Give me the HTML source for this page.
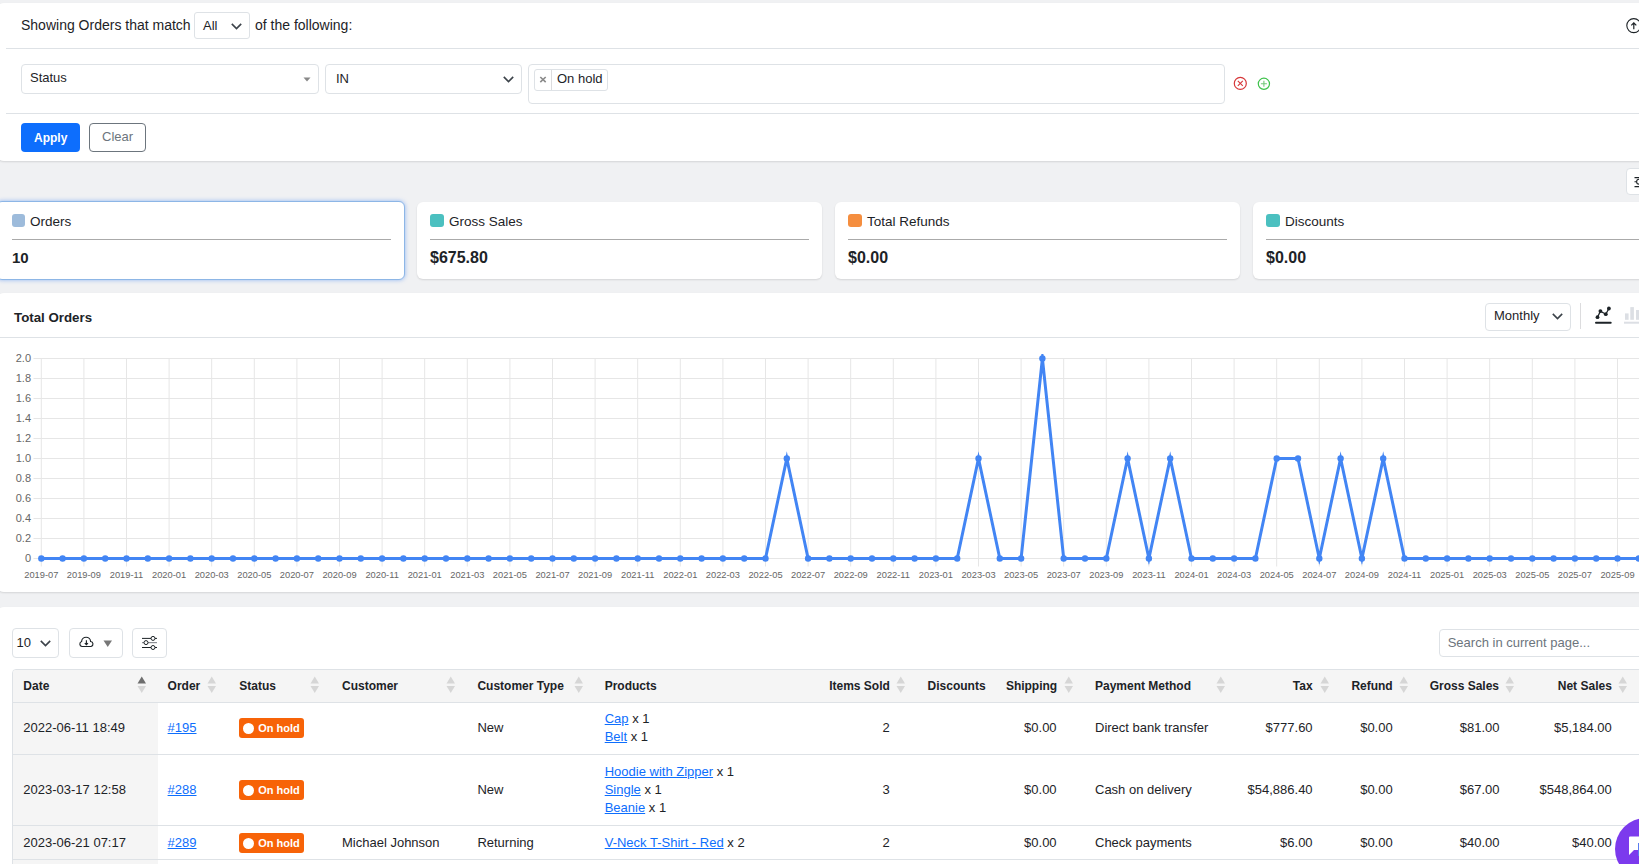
<!DOCTYPE html>
<html><head><meta charset="utf-8">
<style>
*{box-sizing:border-box;margin:0;padding:0}
html,body{width:1639px;height:864px;overflow:hidden;background:#f0f1f3;font-family:"Liberation Sans",sans-serif;color:#1d2327}
.abs{position:absolute}
.card{position:absolute;background:#fff;border-radius:8px;box-shadow:0 1px 2px rgba(0,0,0,.12)}
.hline{position:absolute;height:1px;background:#dee2e6}
.sel{position:absolute;border:1px solid #dee2e6;border-radius:4px;background:#fff}
.t{position:absolute;white-space:nowrap;line-height:1}
.chev{position:absolute}
</style></head><body>

<!-- FILTER CARD -->
<div class="card" style="left:-4px;top:3px;width:1720px;height:158px;"></div>
<div class="t" style="left:21px;top:18px;font-size:14px;">Showing Orders that match</div>
<div class="sel" style="left:194px;top:12px;width:56px;height:27px;border-radius:3px;"></div>
<div class="t" style="left:203px;top:19px;font-size:13px;">All</div>
<svg class="chev" style="left:231px;top:23px" width="11" height="7" viewBox="0 0 11 7"><path d="M0.8 0.9 L5.5 5.6 L10.2 0.9" fill="none" stroke="#3c434a" stroke-width="1.6"/></svg>
<div class="t" style="left:255px;top:18px;font-size:14px;">of the following:</div>
<div class="hline" style="left:6px;top:48px;width:1700px;"></div>

<div class="sel" style="left:21px;top:64px;width:298px;height:30px;"></div>
<div class="t" style="left:30px;top:71px;font-size:13px;">Status</div>
<svg class="abs" style="left:303px;top:77px" width="8" height="5" viewBox="0 0 8 5"><path d="M0.5 0.5 L7.5 0.5 L4 4.5Z" fill="#888"/></svg>

<div class="sel" style="left:325px;top:64px;width:197px;height:30px;"></div>
<div class="t" style="left:336px;top:72px;font-size:13px;">IN</div>
<svg class="chev" style="left:503px;top:76px" width="11" height="7" viewBox="0 0 11 7"><path d="M0.8 0.9 L5.5 5.6 L10.2 0.9" fill="none" stroke="#3c434a" stroke-width="1.6"/></svg>

<div class="sel" style="left:528px;top:64px;width:697px;height:40px;"></div>
<div class="sel" style="left:534px;top:69px;width:74px;height:22px;border-radius:3px;"></div>
<div class="abs" style="left:551px;top:70px;width:1px;height:20px;background:#dcdcde"></div>
<svg class="abs" style="left:539px;top:76px" width="8" height="7" viewBox="0 0 8 7"><path d="M1.3 1 L6.7 6.2 M6.7 1 L1.3 6.2" stroke="#8a8a8a" stroke-width="1.6"/></svg>
<div class="t" style="left:557px;top:72px;font-size:13px;">On hold</div>

<svg class="abs" style="left:1233px;top:76px" width="15" height="15" viewBox="0 0 15 15"><circle cx="7.3" cy="7.4" r="6" fill="none" stroke="#d63638" stroke-width="1.2"/><path d="M4.8 4.9 L9.8 9.9 M9.8 4.9 L4.8 9.9" stroke="#d63638" stroke-width="1.1"/></svg>
<svg class="abs" style="left:1257px;top:77px" width="14" height="14" viewBox="0 0 14 14"><circle cx="6.9" cy="6.8" r="5.6" fill="none" stroke="#3ec24b" stroke-width="1.2"/><path d="M6.9 3.8 V9.8 M3.9 6.8 H9.9" stroke="#73c878" stroke-width="1.1"/></svg>

<div class="hline" style="left:6px;top:113px;width:1700px;"></div>
<div class="abs" style="left:21px;top:123px;width:59px;height:29px;background:#0d6efd;border-radius:4px;"></div>
<div class="t" style="left:34px;top:131.5px;font-size:12px;font-weight:700;color:#fff;">Apply</div>
<div class="abs" style="left:89px;top:123px;width:57px;height:29px;border:1px solid #6c757d;border-radius:4px;"></div>
<div class="t" style="left:102px;top:130px;font-size:13px;color:#6c757d;">Clear</div>

<svg class="abs" style="left:1626px;top:17.5px" width="16" height="16" viewBox="0 0 16 16"><circle cx="7.8" cy="7.6" r="7" fill="none" stroke="#1d2327" stroke-width="1.1"/><path d="M7.8 11.3 V4.8 M5.3 7.3 L7.8 4.8 L10.3 7.3" fill="none" stroke="#1d2327" stroke-width="1.2"/></svg>

<!-- small top-right button -->
<div class="sel" style="left:1626px;top:168px;width:40px;height:27px;border-radius:4px;"></div>
<svg class="abs" style="left:1630px;top:172px" width="12" height="20" viewBox="0 0 12 20"><path d="M4.5 5.6 H12 M4.5 14.6 H12 M4.5 9.7 H6.5" stroke="#1d2327" stroke-width="1.1"/><circle cx="9" cy="9.7" r="2.4" fill="#fff" stroke="#1d2327" stroke-width="1.1"/></svg>

<!-- STAT CARDS -->
<div class="abs" style="left:-4px;top:201px;width:409px;height:79px;background:#fff;border:1.5px solid #8db6e6;border-radius:6px;box-shadow:0 0 4px rgba(66,133,244,.55)"></div>
<div class="abs" style="left:12px;top:214px;width:13px;height:13px;background:#9dbbdb;border-radius:3px"></div>
<div class="t" style="left:30px;top:215px;font-size:13.5px;">Orders</div>
<div class="abs" style="left:12px;top:239px;width:379px;height:1px;background:#aaa"></div>
<div class="t" style="left:12px;top:250px;font-size:15px;font-weight:700;">10</div>

<div class="card" style="left:417px;top:202px;width:405px;height:77px;border-radius:6px;"></div>
<div class="abs" style="left:430px;top:214px;width:14px;height:13px;background:#4bc0c0;border-radius:3px"></div>
<div class="t" style="left:449px;top:215px;font-size:13.5px;">Gross Sales</div>
<div class="abs" style="left:430px;top:239px;width:379px;height:1px;background:#aaa"></div>
<div class="t" style="left:430px;top:250px;font-size:16px;font-weight:700;">$675.80</div>

<div class="card" style="left:835px;top:202px;width:405px;height:77px;border-radius:6px;"></div>
<div class="abs" style="left:848px;top:214px;width:14px;height:13px;background:#f58e3f;border-radius:3px"></div>
<div class="t" style="left:867px;top:215px;font-size:13.5px;">Total Refunds</div>
<div class="abs" style="left:848px;top:239px;width:379px;height:1px;background:#aaa"></div>
<div class="t" style="left:848px;top:250px;font-size:16px;font-weight:700;">$0.00</div>

<div class="card" style="left:1253px;top:202px;width:405px;height:77px;border-radius:6px;"></div>
<div class="abs" style="left:1266px;top:214px;width:14px;height:13px;background:#4bc0c0;border-radius:3px"></div>
<div class="t" style="left:1285px;top:215px;font-size:13.5px;">Discounts</div>
<div class="abs" style="left:1266px;top:239px;width:379px;height:1px;background:#aaa"></div>
<div class="t" style="left:1266px;top:250px;font-size:16px;font-weight:700;">$0.00</div>

<!-- CHART CARD -->
<div class="card" style="left:-4px;top:293px;width:1720px;height:299px;"></div>
<div class="t" style="left:14px;top:311px;font-size:13.3px;font-weight:700;">Total Orders</div>
<div class="hline" style="left:0;top:337px;width:1700px;"></div>
<div class="sel" style="left:1485px;top:303px;width:86px;height:28px;border-radius:4px;"></div>
<div class="t" style="left:1494px;top:309px;font-size:13px;">Monthly</div>
<svg class="chev" style="left:1552px;top:313px" width="11" height="7" viewBox="0 0 11 7"><path d="M0.8 0.9 L5.5 5.6 L10.2 0.9" fill="none" stroke="#3c434a" stroke-width="1.6"/></svg>
<div class="abs" style="left:1580px;top:303px;width:1px;height:26px;background:#dcdcde"></div>
<svg class="abs" style="left:1594px;top:306px" width="19" height="19" viewBox="0 0 19 19"><path d="M3.5 11.2 L6.4 5.1 L11.8 8.2 L14.9 2.5" fill="none" stroke="#1d2327" stroke-width="1.3"/><circle cx="3.5" cy="11.2" r="1.9" fill="#1d2327"/><circle cx="6.4" cy="5.1" r="1.9" fill="#1d2327"/><circle cx="11.8" cy="8.2" r="1.9" fill="#1d2327"/><circle cx="14.9" cy="2.5" r="1.9" fill="#1d2327"/><rect x="1" y="15.7" width="16.7" height="2" rx="1" fill="#1d2327"/></svg>
<svg class="abs" style="left:1624px;top:306px" width="19" height="19" viewBox="0 0 19 19"><rect x="1" y="7.4" width="3.6" height="6.4" fill="#dcdfe4"/><rect x="6.3" y="1.1" width="3.6" height="12.7" fill="#dcdfe4"/><rect x="12" y="4" width="3.6" height="9.8" fill="#dcdfe4"/><rect x="0" y="15.7" width="19" height="2" fill="#dcdfe4"/></svg>

<!--CHART--><svg class="abs" style="left:0;top:340px" width="1639" height="252" viewBox="0 0 1639 252">
<path d="M33.5 218.5 H1639 M33.5 198.5 H1639 M33.5 178.5 H1639 M33.5 158.5 H1639 M33.5 138.5 H1639 M33.5 118.5 H1639 M33.5 98.5 H1639 M33.5 78.5 H1639 M33.5 58.5 H1639 M33.5 38.5 H1639 M33.5 18.5 H1639 M41.3 18 V226.5 M83.9 18 V226.5 M126.5 18 V226.5 M169.1 18 V226.5 M211.7 18 V226.5 M254.3 18 V226.5 M296.9 18 V226.5 M339.5 18 V226.5 M382.1 18 V226.5 M424.7 18 V226.5 M467.3 18 V226.5 M509.9 18 V226.5 M552.5 18 V226.5 M595.1 18 V226.5 M637.7 18 V226.5 M680.3 18 V226.5 M722.9 18 V226.5 M765.5 18 V226.5 M808.1 18 V226.5 M850.7 18 V226.5 M893.3 18 V226.5 M935.9 18 V226.5 M978.5 18 V226.5 M1021.1 18 V226.5 M1063.7 18 V226.5 M1106.3 18 V226.5 M1148.9 18 V226.5 M1191.5 18 V226.5 M1234.1 18 V226.5 M1276.7 18 V226.5 M1319.3 18 V226.5 M1361.9 18 V226.5 M1404.5 18 V226.5 M1447.1 18 V226.5 M1489.7 18 V226.5 M1532.3 18 V226.5 M1574.9 18 V226.5 M1617.5 18 V226.5" stroke="#e6e6e6" stroke-width="1" fill="none"/>
<text x="31" y="221.7" text-anchor="end" font-size="11" fill="#666">0</text>
<text x="31" y="201.7" text-anchor="end" font-size="11" fill="#666">0.2</text>
<text x="31" y="181.7" text-anchor="end" font-size="11" fill="#666">0.4</text>
<text x="31" y="161.7" text-anchor="end" font-size="11" fill="#666">0.6</text>
<text x="31" y="141.7" text-anchor="end" font-size="11" fill="#666">0.8</text>
<text x="31" y="121.7" text-anchor="end" font-size="11" fill="#666">1.0</text>
<text x="31" y="101.7" text-anchor="end" font-size="11" fill="#666">1.2</text>
<text x="31" y="81.7" text-anchor="end" font-size="11" fill="#666">1.4</text>
<text x="31" y="61.7" text-anchor="end" font-size="11" fill="#666">1.6</text>
<text x="31" y="41.7" text-anchor="end" font-size="11" fill="#666">1.8</text>
<text x="31" y="21.7" text-anchor="end" font-size="11" fill="#666">2.0</text>
<text x="41.3" y="237.8" text-anchor="middle" font-size="9.3" fill="#666">2019-07</text>
<text x="83.9" y="237.8" text-anchor="middle" font-size="9.3" fill="#666">2019-09</text>
<text x="126.5" y="237.8" text-anchor="middle" font-size="9.3" fill="#666">2019-11</text>
<text x="169.1" y="237.8" text-anchor="middle" font-size="9.3" fill="#666">2020-01</text>
<text x="211.7" y="237.8" text-anchor="middle" font-size="9.3" fill="#666">2020-03</text>
<text x="254.3" y="237.8" text-anchor="middle" font-size="9.3" fill="#666">2020-05</text>
<text x="296.9" y="237.8" text-anchor="middle" font-size="9.3" fill="#666">2020-07</text>
<text x="339.5" y="237.8" text-anchor="middle" font-size="9.3" fill="#666">2020-09</text>
<text x="382.1" y="237.8" text-anchor="middle" font-size="9.3" fill="#666">2020-11</text>
<text x="424.7" y="237.8" text-anchor="middle" font-size="9.3" fill="#666">2021-01</text>
<text x="467.3" y="237.8" text-anchor="middle" font-size="9.3" fill="#666">2021-03</text>
<text x="509.9" y="237.8" text-anchor="middle" font-size="9.3" fill="#666">2021-05</text>
<text x="552.5" y="237.8" text-anchor="middle" font-size="9.3" fill="#666">2021-07</text>
<text x="595.1" y="237.8" text-anchor="middle" font-size="9.3" fill="#666">2021-09</text>
<text x="637.7" y="237.8" text-anchor="middle" font-size="9.3" fill="#666">2021-11</text>
<text x="680.3" y="237.8" text-anchor="middle" font-size="9.3" fill="#666">2022-01</text>
<text x="722.9" y="237.8" text-anchor="middle" font-size="9.3" fill="#666">2022-03</text>
<text x="765.5" y="237.8" text-anchor="middle" font-size="9.3" fill="#666">2022-05</text>
<text x="808.1" y="237.8" text-anchor="middle" font-size="9.3" fill="#666">2022-07</text>
<text x="850.7" y="237.8" text-anchor="middle" font-size="9.3" fill="#666">2022-09</text>
<text x="893.3" y="237.8" text-anchor="middle" font-size="9.3" fill="#666">2022-11</text>
<text x="935.9" y="237.8" text-anchor="middle" font-size="9.3" fill="#666">2023-01</text>
<text x="978.5" y="237.8" text-anchor="middle" font-size="9.3" fill="#666">2023-03</text>
<text x="1021.1" y="237.8" text-anchor="middle" font-size="9.3" fill="#666">2023-05</text>
<text x="1063.7" y="237.8" text-anchor="middle" font-size="9.3" fill="#666">2023-07</text>
<text x="1106.3" y="237.8" text-anchor="middle" font-size="9.3" fill="#666">2023-09</text>
<text x="1148.9" y="237.8" text-anchor="middle" font-size="9.3" fill="#666">2023-11</text>
<text x="1191.5" y="237.8" text-anchor="middle" font-size="9.3" fill="#666">2024-01</text>
<text x="1234.1" y="237.8" text-anchor="middle" font-size="9.3" fill="#666">2024-03</text>
<text x="1276.7" y="237.8" text-anchor="middle" font-size="9.3" fill="#666">2024-05</text>
<text x="1319.3" y="237.8" text-anchor="middle" font-size="9.3" fill="#666">2024-07</text>
<text x="1361.9" y="237.8" text-anchor="middle" font-size="9.3" fill="#666">2024-09</text>
<text x="1404.5" y="237.8" text-anchor="middle" font-size="9.3" fill="#666">2024-11</text>
<text x="1447.1" y="237.8" text-anchor="middle" font-size="9.3" fill="#666">2025-01</text>
<text x="1489.7" y="237.8" text-anchor="middle" font-size="9.3" fill="#666">2025-03</text>
<text x="1532.3" y="237.8" text-anchor="middle" font-size="9.3" fill="#666">2025-05</text>
<text x="1574.9" y="237.8" text-anchor="middle" font-size="9.3" fill="#666">2025-07</text>
<text x="1617.5" y="237.8" text-anchor="middle" font-size="9.3" fill="#666">2025-09</text>
<defs><clipPath id="ca"><rect x="0" y="13.9" width="1639" height="210.5"/></clipPath></defs>
<polyline points="41.3,218.5 62.6,218.5 83.9,218.5 105.2,218.5 126.5,218.5 147.8,218.5 169.1,218.5 190.4,218.5 211.7,218.5 233.0,218.5 254.3,218.5 275.6,218.5 296.9,218.5 318.2,218.5 339.5,218.5 360.8,218.5 382.1,218.5 403.4,218.5 424.7,218.5 446.0,218.5 467.3,218.5 488.6,218.5 509.9,218.5 531.2,218.5 552.5,218.5 573.8,218.5 595.1,218.5 616.4,218.5 637.7,218.5 659.0,218.5 680.3,218.5 701.6,218.5 722.9,218.5 744.2,218.5 765.5,218.5 786.8,118.5 808.1,218.5 829.4,218.5 850.7,218.5 872.0,218.5 893.3,218.5 914.6,218.5 935.9,218.5 957.2,218.5 978.5,118.5 999.8,218.5 1021.1,218.5 1042.4,18.5 1063.7,218.5 1085.0,218.5 1106.3,218.5 1127.6,118.5 1148.9,218.5 1170.2,118.5 1191.5,218.5 1212.8,218.5 1234.1,218.5 1255.4,218.5 1276.7,118.5 1298.0,118.5 1319.3,218.5 1340.6,118.5 1361.9,218.5 1383.2,118.5 1404.5,218.5 1425.8,218.5 1447.1,218.5 1468.4,218.5 1489.7,218.5 1511.0,218.5 1532.3,218.5 1553.6,218.5 1574.9,218.5 1596.2,218.5 1617.5,218.5 1638.8,218.5" fill="none" stroke="#4285f4" stroke-width="3" stroke-linejoin="miter" stroke-miterlimit="10" clip-path="url(#ca)"/>
<circle cx="41.3" cy="218.5" r="3.2" fill="#4285f4"/>
<circle cx="62.6" cy="218.5" r="3.2" fill="#4285f4"/>
<circle cx="83.9" cy="218.5" r="3.2" fill="#4285f4"/>
<circle cx="105.2" cy="218.5" r="3.2" fill="#4285f4"/>
<circle cx="126.5" cy="218.5" r="3.2" fill="#4285f4"/>
<circle cx="147.8" cy="218.5" r="3.2" fill="#4285f4"/>
<circle cx="169.1" cy="218.5" r="3.2" fill="#4285f4"/>
<circle cx="190.4" cy="218.5" r="3.2" fill="#4285f4"/>
<circle cx="211.7" cy="218.5" r="3.2" fill="#4285f4"/>
<circle cx="233.0" cy="218.5" r="3.2" fill="#4285f4"/>
<circle cx="254.3" cy="218.5" r="3.2" fill="#4285f4"/>
<circle cx="275.6" cy="218.5" r="3.2" fill="#4285f4"/>
<circle cx="296.9" cy="218.5" r="3.2" fill="#4285f4"/>
<circle cx="318.2" cy="218.5" r="3.2" fill="#4285f4"/>
<circle cx="339.5" cy="218.5" r="3.2" fill="#4285f4"/>
<circle cx="360.8" cy="218.5" r="3.2" fill="#4285f4"/>
<circle cx="382.1" cy="218.5" r="3.2" fill="#4285f4"/>
<circle cx="403.4" cy="218.5" r="3.2" fill="#4285f4"/>
<circle cx="424.7" cy="218.5" r="3.2" fill="#4285f4"/>
<circle cx="446.0" cy="218.5" r="3.2" fill="#4285f4"/>
<circle cx="467.3" cy="218.5" r="3.2" fill="#4285f4"/>
<circle cx="488.6" cy="218.5" r="3.2" fill="#4285f4"/>
<circle cx="509.9" cy="218.5" r="3.2" fill="#4285f4"/>
<circle cx="531.2" cy="218.5" r="3.2" fill="#4285f4"/>
<circle cx="552.5" cy="218.5" r="3.2" fill="#4285f4"/>
<circle cx="573.8" cy="218.5" r="3.2" fill="#4285f4"/>
<circle cx="595.1" cy="218.5" r="3.2" fill="#4285f4"/>
<circle cx="616.4" cy="218.5" r="3.2" fill="#4285f4"/>
<circle cx="637.7" cy="218.5" r="3.2" fill="#4285f4"/>
<circle cx="659.0" cy="218.5" r="3.2" fill="#4285f4"/>
<circle cx="680.3" cy="218.5" r="3.2" fill="#4285f4"/>
<circle cx="701.6" cy="218.5" r="3.2" fill="#4285f4"/>
<circle cx="722.9" cy="218.5" r="3.2" fill="#4285f4"/>
<circle cx="744.2" cy="218.5" r="3.2" fill="#4285f4"/>
<circle cx="765.5" cy="218.5" r="3.2" fill="#4285f4"/>
<circle cx="786.8" cy="118.5" r="3.2" fill="#4285f4"/>
<circle cx="808.1" cy="218.5" r="3.2" fill="#4285f4"/>
<circle cx="829.4" cy="218.5" r="3.2" fill="#4285f4"/>
<circle cx="850.7" cy="218.5" r="3.2" fill="#4285f4"/>
<circle cx="872.0" cy="218.5" r="3.2" fill="#4285f4"/>
<circle cx="893.3" cy="218.5" r="3.2" fill="#4285f4"/>
<circle cx="914.6" cy="218.5" r="3.2" fill="#4285f4"/>
<circle cx="935.9" cy="218.5" r="3.2" fill="#4285f4"/>
<circle cx="957.2" cy="218.5" r="3.2" fill="#4285f4"/>
<circle cx="978.5" cy="118.5" r="3.2" fill="#4285f4"/>
<circle cx="999.8" cy="218.5" r="3.2" fill="#4285f4"/>
<circle cx="1021.1" cy="218.5" r="3.2" fill="#4285f4"/>
<circle cx="1042.4" cy="18.5" r="3.2" fill="#4285f4"/>
<circle cx="1063.7" cy="218.5" r="3.2" fill="#4285f4"/>
<circle cx="1085.0" cy="218.5" r="3.2" fill="#4285f4"/>
<circle cx="1106.3" cy="218.5" r="3.2" fill="#4285f4"/>
<circle cx="1127.6" cy="118.5" r="3.2" fill="#4285f4"/>
<circle cx="1148.9" cy="218.5" r="3.2" fill="#4285f4"/>
<circle cx="1170.2" cy="118.5" r="3.2" fill="#4285f4"/>
<circle cx="1191.5" cy="218.5" r="3.2" fill="#4285f4"/>
<circle cx="1212.8" cy="218.5" r="3.2" fill="#4285f4"/>
<circle cx="1234.1" cy="218.5" r="3.2" fill="#4285f4"/>
<circle cx="1255.4" cy="218.5" r="3.2" fill="#4285f4"/>
<circle cx="1276.7" cy="118.5" r="3.2" fill="#4285f4"/>
<circle cx="1298.0" cy="118.5" r="3.2" fill="#4285f4"/>
<circle cx="1319.3" cy="218.5" r="3.2" fill="#4285f4"/>
<circle cx="1340.6" cy="118.5" r="3.2" fill="#4285f4"/>
<circle cx="1361.9" cy="218.5" r="3.2" fill="#4285f4"/>
<circle cx="1383.2" cy="118.5" r="3.2" fill="#4285f4"/>
<circle cx="1404.5" cy="218.5" r="3.2" fill="#4285f4"/>
<circle cx="1425.8" cy="218.5" r="3.2" fill="#4285f4"/>
<circle cx="1447.1" cy="218.5" r="3.2" fill="#4285f4"/>
<circle cx="1468.4" cy="218.5" r="3.2" fill="#4285f4"/>
<circle cx="1489.7" cy="218.5" r="3.2" fill="#4285f4"/>
<circle cx="1511.0" cy="218.5" r="3.2" fill="#4285f4"/>
<circle cx="1532.3" cy="218.5" r="3.2" fill="#4285f4"/>
<circle cx="1553.6" cy="218.5" r="3.2" fill="#4285f4"/>
<circle cx="1574.9" cy="218.5" r="3.2" fill="#4285f4"/>
<circle cx="1596.2" cy="218.5" r="3.2" fill="#4285f4"/>
<circle cx="1617.5" cy="218.5" r="3.2" fill="#4285f4"/>
<circle cx="1638.8" cy="218.5" r="3.2" fill="#4285f4"/>
</svg><!--/CHART-->

<!-- TABLE CARD -->
<!--TABLE--><div class="card" style="left:-4px;top:607px;width:1720px;height:400px;"></div>
<div class="sel" style="left:12px;top:628px;width:47px;height:30px;border-radius:4px;"></div>
<div class="t" style="left:16.5px;top:636.00px;font-size:13px;font-weight:400;color:#1d2327;">10</div>
<svg class="chev" style="left:40px;top:640px" width="11" height="7" viewBox="0 0 11 7"><path d="M0.8 0.9 L5.5 5.6 L10.2 0.9" fill="none" stroke="#3c434a" stroke-width="1.6"/></svg>
<div class="sel" style="left:69px;top:628px;width:54px;height:30px;border-radius:4px;"></div>
<svg class="abs" style="left:78px;top:635px" width="17" height="13" viewBox="0 0 17 13"><path d="M3.9 11.5 A2.6 2.6 0 0 1 3.6 6.5 A4.51 4.51 0 0 1 12.6 6.5 A2.55 2.55 0 0 1 13.1 11.5 Z" fill="none" stroke="#1d2327" stroke-width="1.15"/><path d="M8.4 5.2 V9.7 M6.8 8.1 L8.4 9.7 L10 8.1" fill="none" stroke="#1d2327" stroke-width="1.15"/></svg>
<svg class="abs" style="left:103px;top:640px" width="10" height="8" viewBox="0 0 10 8"><path d="M0.5 0.5 H9 L4.75 7Z" fill="#777"/></svg>
<div class="sel" style="left:132px;top:628px;width:35px;height:30px;border-radius:4px;"></div>
<svg class="abs" style="left:141px;top:635px" width="17" height="16" viewBox="0 0 17 16"><path d="M1 3.4 H16 M1 12.5 H16" stroke="#1d2327" stroke-width="1"/><path d="M1 7.6 H16" stroke="#8c8f94" stroke-width="1.2"/><circle cx="12" cy="3.4" r="2" fill="#fff" stroke="#1d2327" stroke-width="1"/><circle cx="5" cy="7.6" r="2" fill="#fff" stroke="#1d2327" stroke-width="1"/><circle cx="12" cy="12.5" r="2" fill="#fff" stroke="#1d2327" stroke-width="1"/></svg>
<div class="sel" style="left:1439px;top:629px;width:240px;height:28px;border-radius:4px;"></div>
<div class="t" style="left:1447.7px;top:635.70px;font-size:13px;font-weight:400;color:#6c757d;">Search in current page...</div>
<div class="abs" style="left:12px;top:669px;width:1700px;height:300px;border:1px solid #dee2e6;border-radius:4px;overflow:hidden"><div class="abs" style="left:0;top:0;width:1700px;height:32px;background:#f5f5f5"></div><div class="abs" style="left:0;top:32px;width:145px;height:300px;background:#f5f5f5"></div></div>
<div class="hline" style="left:13px;top:702px;width:1700px;"></div>
<div class="hline" style="left:13px;top:754px;width:1700px;"></div>
<div class="hline" style="left:13px;top:825px;width:1700px;"></div>
<div class="hline" style="left:13px;top:859px;width:1700px;"></div>
<div class="t" style="left:23.3px;top:679.84px;font-size:12px;font-weight:700;color:#1d2327;">Date</div>
<svg class="abs" style="left:136.5px;top:676px" width="10" height="18" viewBox="0 0 10 18"><path d="M0.5 7.5 L4.75 0.5 L9 7.5Z" fill="#6e6e6e"/><path d="M0.5 10 H9 L4.75 17Z" fill="#d6d6d6"/></svg>
<div class="t" style="left:167.6px;top:679.84px;font-size:12px;font-weight:700;color:#1d2327;">Order</div>
<svg class="abs" style="left:207px;top:676px" width="10" height="18" viewBox="0 0 10 18"><path d="M0.5 7.5 L4.75 0.5 L9 7.5Z" fill="#d6d6d6"/><path d="M0.5 10 H9 L4.75 17Z" fill="#d6d6d6"/></svg>
<div class="t" style="left:239.3px;top:679.84px;font-size:12px;font-weight:700;color:#1d2327;">Status</div>
<svg class="abs" style="left:310px;top:676px" width="10" height="18" viewBox="0 0 10 18"><path d="M0.5 7.5 L4.75 0.5 L9 7.5Z" fill="#d6d6d6"/><path d="M0.5 10 H9 L4.75 17Z" fill="#d6d6d6"/></svg>
<div class="t" style="left:342.0px;top:679.84px;font-size:12px;font-weight:700;color:#1d2327;">Customer</div>
<svg class="abs" style="left:445.5px;top:676px" width="10" height="18" viewBox="0 0 10 18"><path d="M0.5 7.5 L4.75 0.5 L9 7.5Z" fill="#d6d6d6"/><path d="M0.5 10 H9 L4.75 17Z" fill="#d6d6d6"/></svg>
<div class="t" style="left:477.4px;top:679.84px;font-size:12px;font-weight:700;color:#1d2327;">Customer Type</div>
<svg class="abs" style="left:573.5px;top:676px" width="10" height="18" viewBox="0 0 10 18"><path d="M0.5 7.5 L4.75 0.5 L9 7.5Z" fill="#d6d6d6"/><path d="M0.5 10 H9 L4.75 17Z" fill="#d6d6d6"/></svg>
<div class="t" style="left:604.7px;top:679.84px;font-size:12px;font-weight:700;color:#1d2327;">Products</div>
<div class="t" style="right:749.2px;top:679.84px;font-size:12px;font-weight:700;color:#1d2327;text-align:right;">Items Sold</div>
<svg class="abs" style="left:896px;top:676px" width="10" height="18" viewBox="0 0 10 18"><path d="M0.5 7.5 L4.75 0.5 L9 7.5Z" fill="#d6d6d6"/><path d="M0.5 10 H9 L4.75 17Z" fill="#d6d6d6"/></svg>
<div class="t" style="left:927.6px;top:679.84px;font-size:12px;font-weight:700;color:#1d2327;">Discounts</div>
<div class="t" style="right:581.8px;top:679.84px;font-size:12px;font-weight:700;color:#1d2327;text-align:right;">Shipping</div>
<svg class="abs" style="left:1063.5px;top:676px" width="10" height="18" viewBox="0 0 10 18"><path d="M0.5 7.5 L4.75 0.5 L9 7.5Z" fill="#d6d6d6"/><path d="M0.5 10 H9 L4.75 17Z" fill="#d6d6d6"/></svg>
<div class="t" style="left:1095.0px;top:679.84px;font-size:12px;font-weight:700;color:#1d2327;">Payment Method</div>
<svg class="abs" style="left:1215.5px;top:676px" width="10" height="18" viewBox="0 0 10 18"><path d="M0.5 7.5 L4.75 0.5 L9 7.5Z" fill="#d6d6d6"/><path d="M0.5 10 H9 L4.75 17Z" fill="#d6d6d6"/></svg>
<div class="t" style="right:326.4px;top:679.84px;font-size:12px;font-weight:700;color:#1d2327;text-align:right;">Tax</div>
<svg class="abs" style="left:1319.5px;top:676px" width="10" height="18" viewBox="0 0 10 18"><path d="M0.5 7.5 L4.75 0.5 L9 7.5Z" fill="#d6d6d6"/><path d="M0.5 10 H9 L4.75 17Z" fill="#d6d6d6"/></svg>
<div class="t" style="right:246.3px;top:679.84px;font-size:12px;font-weight:700;color:#1d2327;text-align:right;">Refund</div>
<svg class="abs" style="left:1399px;top:676px" width="10" height="18" viewBox="0 0 10 18"><path d="M0.5 7.5 L4.75 0.5 L9 7.5Z" fill="#d6d6d6"/><path d="M0.5 10 H9 L4.75 17Z" fill="#d6d6d6"/></svg>
<div class="t" style="right:140.0px;top:679.84px;font-size:12px;font-weight:700;color:#1d2327;text-align:right;">Gross Sales</div>
<svg class="abs" style="left:1505px;top:676px" width="10" height="18" viewBox="0 0 10 18"><path d="M0.5 7.5 L4.75 0.5 L9 7.5Z" fill="#d6d6d6"/><path d="M0.5 10 H9 L4.75 17Z" fill="#d6d6d6"/></svg>
<div class="t" style="right:27.2px;top:679.84px;font-size:12px;font-weight:700;color:#1d2327;text-align:right;">Net Sales</div>
<svg class="abs" style="left:1618px;top:676px" width="10" height="18" viewBox="0 0 10 18"><path d="M0.5 7.5 L4.75 0.5 L9 7.5Z" fill="#d6d6d6"/><path d="M0.5 10 H9 L4.75 17Z" fill="#d6d6d6"/></svg>
<div class="t" style="left:23.3px;top:720.70px;font-size:13px;font-weight:400;color:#1d2327;">2022-06-11 18:49</div>
<div class="t" style="left:167.6px;top:720.70px;font-size:13px;font-weight:400;color:#0d6efd;text-decoration:underline;">#195</div>
<div class="abs" style="left:239px;top:718px;width:65px;height:20px;background:#f76308;border-radius:3px"></div>
<div class="abs" style="left:243px;top:723px;width:11px;height:11px;background:#fff;border-radius:50%"></div>
<div class="t" style="left:258.2px;top:723.29px;font-size:11px;font-weight:700;color:#fff;">On hold</div>
<div class="t" style="left:477.4px;top:720.70px;font-size:13px;font-weight:400;color:#1d2327;">New</div>
<div class="t" style="left:604.7px;top:711.80px;font-size:13px;"><span style="color:#0d6efd;text-decoration:underline">Cap</span> x 1</div>
<div class="t" style="left:604.7px;top:729.80px;font-size:13px;"><span style="color:#0d6efd;text-decoration:underline">Belt</span> x 1</div>
<div class="t" style="right:749.4px;top:720.70px;font-size:13px;font-weight:400;color:#1d2327;text-align:right;">2</div>
<div class="t" style="right:582.4px;top:720.70px;font-size:13px;font-weight:400;color:#1d2327;text-align:right;">$0.00</div>
<div class="t" style="left:1095.0px;top:720.70px;font-size:13px;font-weight:400;color:#1d2327;">Direct bank transfer</div>
<div class="t" style="right:326.4px;top:720.70px;font-size:13px;font-weight:400;color:#1d2327;text-align:right;">$777.60</div>
<div class="t" style="right:246.3px;top:720.70px;font-size:13px;font-weight:400;color:#1d2327;text-align:right;">$0.00</div>
<div class="t" style="right:139.5px;top:720.70px;font-size:13px;font-weight:400;color:#1d2327;text-align:right;">$81.00</div>
<div class="t" style="right:27.2px;top:720.70px;font-size:13px;font-weight:400;color:#1d2327;text-align:right;">$5,184.00</div>
<div class="t" style="left:23.3px;top:782.70px;font-size:13px;font-weight:400;color:#1d2327;">2023-03-17 12:58</div>
<div class="t" style="left:167.6px;top:782.70px;font-size:13px;font-weight:400;color:#0d6efd;text-decoration:underline;">#288</div>
<div class="abs" style="left:239px;top:780px;width:65px;height:20px;background:#f76308;border-radius:3px"></div>
<div class="abs" style="left:243px;top:785px;width:11px;height:11px;background:#fff;border-radius:50%"></div>
<div class="t" style="left:258.2px;top:785.29px;font-size:11px;font-weight:700;color:#fff;">On hold</div>
<div class="t" style="left:477.4px;top:782.70px;font-size:13px;font-weight:400;color:#1d2327;">New</div>
<div class="t" style="left:604.7px;top:764.90px;font-size:13px;"><span style="color:#0d6efd;text-decoration:underline">Hoodie with Zipper</span> x 1</div>
<div class="t" style="left:604.7px;top:782.70px;font-size:13px;"><span style="color:#0d6efd;text-decoration:underline">Single</span> x 1</div>
<div class="t" style="left:604.7px;top:800.70px;font-size:13px;"><span style="color:#0d6efd;text-decoration:underline">Beanie</span> x 1</div>
<div class="t" style="right:749.4px;top:782.70px;font-size:13px;font-weight:400;color:#1d2327;text-align:right;">3</div>
<div class="t" style="right:582.4px;top:782.70px;font-size:13px;font-weight:400;color:#1d2327;text-align:right;">$0.00</div>
<div class="t" style="left:1095.0px;top:782.70px;font-size:13px;font-weight:400;color:#1d2327;">Cash on delivery</div>
<div class="t" style="right:326.4px;top:782.70px;font-size:13px;font-weight:400;color:#1d2327;text-align:right;">$54,886.40</div>
<div class="t" style="right:246.3px;top:782.70px;font-size:13px;font-weight:400;color:#1d2327;text-align:right;">$0.00</div>
<div class="t" style="right:139.5px;top:782.70px;font-size:13px;font-weight:400;color:#1d2327;text-align:right;">$67.00</div>
<div class="t" style="right:27.2px;top:782.70px;font-size:13px;font-weight:400;color:#1d2327;text-align:right;">$548,864.00</div>
<div class="t" style="left:23.3px;top:835.70px;font-size:13px;font-weight:400;color:#1d2327;">2023-06-21 07:17</div>
<div class="t" style="left:167.6px;top:835.70px;font-size:13px;font-weight:400;color:#0d6efd;text-decoration:underline;">#289</div>
<div class="abs" style="left:239px;top:833px;width:65px;height:20px;background:#f76308;border-radius:3px"></div>
<div class="abs" style="left:243px;top:838px;width:11px;height:11px;background:#fff;border-radius:50%"></div>
<div class="t" style="left:258.2px;top:838.29px;font-size:11px;font-weight:700;color:#fff;">On hold</div>
<div class="t" style="left:342.0px;top:835.70px;font-size:13px;font-weight:400;color:#1d2327;">Michael Johnson</div>
<div class="t" style="left:477.4px;top:835.70px;font-size:13px;font-weight:400;color:#1d2327;">Returning</div>
<div class="t" style="left:604.7px;top:835.70px;font-size:13px;"><span style="color:#0d6efd;text-decoration:underline">V-Neck T-Shirt - Red</span> x 2</div>
<div class="t" style="right:749.4px;top:835.70px;font-size:13px;font-weight:400;color:#1d2327;text-align:right;">2</div>
<div class="t" style="right:582.4px;top:835.70px;font-size:13px;font-weight:400;color:#1d2327;text-align:right;">$0.00</div>
<div class="t" style="left:1095.0px;top:835.70px;font-size:13px;font-weight:400;color:#1d2327;">Check payments</div>
<div class="t" style="right:326.4px;top:835.70px;font-size:13px;font-weight:400;color:#1d2327;text-align:right;">$6.00</div>
<div class="t" style="right:246.3px;top:835.70px;font-size:13px;font-weight:400;color:#1d2327;text-align:right;">$0.00</div>
<div class="t" style="right:139.5px;top:835.70px;font-size:13px;font-weight:400;color:#1d2327;text-align:right;">$40.00</div>
<div class="t" style="right:27.2px;top:835.70px;font-size:13px;font-weight:400;color:#1d2327;text-align:right;">$40.00</div>
<div class="abs" style="left:1615px;top:818px;width:62px;height:62px;background:#7c3aed;border-radius:50%"></div>
<svg class="abs" style="left:1628px;top:836px" width="14" height="20" viewBox="0 0 14 20"><path d="M1 1.5 Q1 0.5 2 0.5 H14 V14 H6 L1 19 Z" fill="#fff"/><rect x="10" y="7" width="4" height="14" fill="#5b7cf0"/></svg><!--/TABLE-->

</body></html>
